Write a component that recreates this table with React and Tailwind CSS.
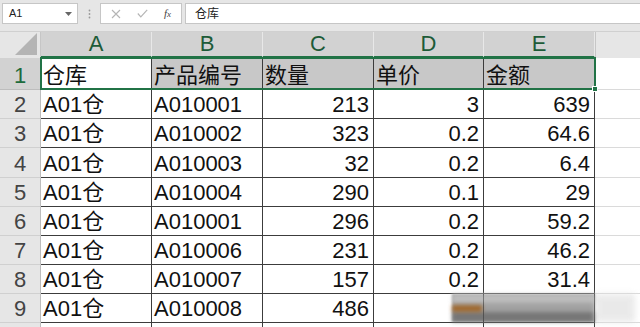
import React from "react";

const FONT = { fontFamily: '"Liberation Sans", "Noto Sans CJK SC", sans-serif' };

const cols = [
  { key: "A", w: "w-[111px]" },
  { key: "B", w: "w-[111px]" },
  { key: "C", w: "w-[111px]" },
  { key: "D", w: "w-[110px]" },
  { key: "E", w: "w-[111px]" },
];

const rows = [
  { n: 1, h: "h-[32px]", cells: ["仓库", "产品编号", "数量", "单价", "金额"], head: true },
  { n: 2, h: "h-[29px]", cells: ["A01仓", "A010001", "213", "3", "639"] },
  { n: 3, h: "h-[29px]", cells: ["A01仓", "A010002", "323", "0.2", "64.6"] },
  { n: 4, h: "h-[30px]", cells: ["A01仓", "A010003", "32", "0.2", "6.4"] },
  { n: 5, h: "h-[29px]", cells: ["A01仓", "A010004", "290", "0.1", "29"] },
  { n: 6, h: "h-[29px]", cells: ["A01仓", "A010001", "296", "0.2", "59.2"] },
  { n: 7, h: "h-[29px]", cells: ["A01仓", "A010006", "231", "0.2", "46.2"] },
  { n: 8, h: "h-[29px]", cells: ["A01仓", "A010007", "157", "0.2", "31.4"] },
  { n: 9, h: "h-[29px]", cells: ["A01仓", "A010008", "486", "", ""] },
  { n: "", h: "h-[29px]", cells: ["", "", "", "", ""], last: true },
];

function FormulaBar() {
  return (
    <div className="h-[31px] bg-[#e6e6e6] flex items-start pt-[3px] pl-[2px]">
      <div className="w-[76px] h-[21px] bg-white border border-[#c6c6c6] flex items-center justify-between pl-[6px] pr-[5px]">
        <span className="text-[11px] text-[#222]" style={FONT}>A1</span>
        <svg width="7" height="4" viewBox="0 0 7 4"><path d="M0 0h7L3.5 4z" fill="#666" /></svg>
      </div>
      <div className="w-[22px] h-[21px] flex items-center justify-center">
        <svg width="3" height="10" viewBox="0 0 3 10">
          <circle cx="1.5" cy="1.5" r="0.9" fill="#9a9a9a" />
          <circle cx="1.5" cy="5" r="0.9" fill="#9a9a9a" />
          <circle cx="1.5" cy="8.5" r="0.9" fill="#9a9a9a" />
        </svg>
      </div>
      <div className="w-[82px] h-[21px] bg-white border border-[#c6c6c6] flex items-center pl-[10px] gap-[16px]">
        <svg width="10" height="10" viewBox="0 0 10 10"><path d="M1 1l8 8M9 1l-8 8" stroke="#b5b5b5" strokeWidth="1.1" /></svg>
        <svg width="11" height="9" viewBox="0 0 11 9"><path d="M0.8 4.5l3 3.3L10.2 0.8" stroke="#b5b5b5" strokeWidth="1.2" fill="none" /></svg>
        <span className="text-[11px] italic text-[#444] leading-none" style={{ fontFamily: '"Liberation Serif", serif' }}>f<span className="text-[9px]">x</span></span>
      </div>
      <div className="ml-[3px] flex-1 h-[21px] bg-white border border-[#c6c6c6] border-r-0 flex items-center pl-[9px]">
        <span className="text-[12px] text-[#222]" style={FONT}>仓库</span>
      </div>
    </div>
  );
}

function HeaderRow() {
  return (
    <div className="flex h-[27px] bg-[#e6e6e6] border-t border-[#d0d0d0]">
      <div className="w-[41px] h-full border-r border-[#c6c6c6] flex items-end justify-end pr-[3px] pb-[3px]">
        <svg width="22" height="22" viewBox="0 0 22 22"><path d="M22 0V22H0z" fill="#b4b4b4" /></svg>
      </div>
      {cols.map((c) => (
        <div
          key={c.key}
          className={`${c.w} h-full bg-[#d2d2d2] border-r border-[#e8e8e8] border-b-2 border-b-[#217346] flex items-end justify-center pb-[1px] text-[22px] leading-[22px] text-[#1d5b38]`}
          style={FONT}
        >
          {c.key}
        </div>
      ))}
      <div className="flex-1 h-full border-l border-[#c6c6c6]" />
    </div>
  );
}

function DataRow({ r }) {
  return (
    <div className={`flex ${r.h}`}>
      <div
        className={`w-[41px] h-full border-r border-b flex items-end justify-center pb-[2px] text-[22px] leading-[22px] ${
          r.head
            ? "bg-[#d2d2d2] text-[#1d6b3c] border-[#bdbdbd]"
            : "bg-[#e6e6e6] text-[#444] border-[#d0d0d0] border-r-[#bdbdbd]"
        }`}
        style={FONT}
      >
        {r.n}
      </div>
      {cols.map((c, i) => {
        const num = i >= 2;
        const sel = r.head && i > 0;
        return (
          <div
            key={c.key}
            className={`${c.w} h-full border-r ${r.last ? "" : "border-b"} border-[#3c3c3c] flex items-end pb-[2px] text-[22px] leading-[22px] text-[#111] overflow-hidden whitespace-nowrap ${
              num && !r.head ? "justify-end pr-[4px]" : "justify-start pl-[2px]"
            } ${sel ? "bg-[#c8c8c8]" : "bg-white"}`}
            style={FONT}
          >
            {r.cells[i]}
          </div>
        );
      })}
      <div className="flex-1 h-full bg-white border-b border-[#dadada]" />
    </div>
  );
}

export default function App() {
  return (
    <div className="w-[640px] h-[327px] overflow-hidden bg-white relative" style={FONT}>
      <FormulaBar />
      <HeaderRow />
      {rows.map((r, idx) => (
        <DataRow key={idx} r={r} />
      ))}
      {/* selection border A1:E1 */}
      <div className="absolute left-[40px] top-[57px] w-[556px] h-[33px] border-2 border-[#217346] pointer-events-none" />
      <div className="absolute left-[592px] top-[86px] w-[6px] h-[6px] bg-[#217346] border border-white pointer-events-none" />
      {/* blurred watermark */}
      <div className="absolute left-[452px] top-[294px] w-[143px] h-[28px] bg-[#8c8c8c] opacity-80 blur-[1px] pointer-events-none" />
      <div className="absolute left-[452px] top-[294px] w-[143px] h-[9px] bg-[#c8c8c8] opacity-70 blur-[2px] pointer-events-none" />
      <div className="absolute left-[452px] top-[312px] w-[143px] h-[10px] bg-[#5a5a5a] opacity-60 blur-[2px] pointer-events-none" />
      <div className="absolute left-[595px] top-[294px] w-[40px] h-[28px] bg-[#dcdcdc] opacity-60 blur-[3px] pointer-events-none" />
      <div className="absolute left-[452px] top-[305px] w-[30px] h-[7px] bg-[#a05a10] opacity-80 blur-[2px] pointer-events-none" />
      <div className="absolute left-[483px] top-[294px] w-[1px] h-[28px] bg-[#3c3c3c] opacity-50 pointer-events-none" />
      <div className="absolute left-[594px] top-[294px] w-[1px] h-[28px] bg-[#3c3c3c] opacity-50 pointer-events-none" />
    </div>
  );
}
